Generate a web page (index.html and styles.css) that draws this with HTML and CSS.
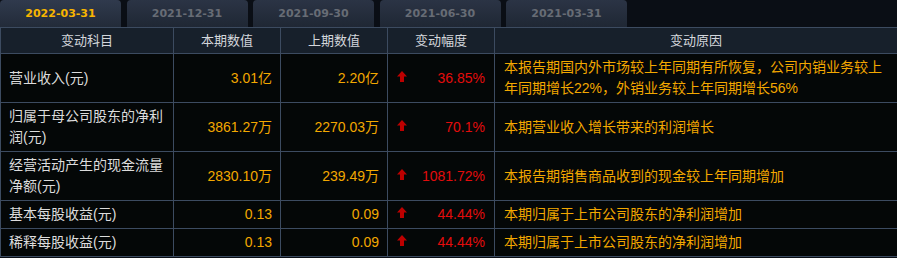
FILE: index.html
```html
<!DOCTYPE html>
<html lang="zh">
<head>
<meta charset="utf-8">
<title>变动</title>
<link rel="stylesheet" href="styles.css">
</head>
<body>
<div class="tabs">
  <div class="tab active">2022-03-31</div>
  <div class="tab">2021-12-31</div>
  <div class="tab">2021-09-30</div>
  <div class="tab">2021-06-30</div>
  <div class="tab">2021-03-31</div>
</div>
<div class="grid">
  <div class="hd">变动科目</div>
  <div class="hd">本期数值</div>
  <div class="hd">上期数值</div>
  <div class="hd">变动幅度</div>
  <div class="hd">变动原因</div>

  <div class="c name">营业收入(元)</div>
  <div class="c num">3.01亿</div>
  <div class="c num">2.20亿</div>
  <div class="c pct"><svg class="up" viewBox="0 0 10 11"><path d="M5 0 L10 5.5 L7 5.5 L7 11 L3 11 L3 5.5 L0 5.5 Z"/></svg><span>36.85%</span></div>
  <div class="c why">本报告期国内外市场较上年同期有所恢复，公司内销业务较上年同期增长22%，外销业务较上年同期增长56%</div>

  <div class="c name">归属于母公司股东的净利润(元)</div>
  <div class="c num">3861.27万</div>
  <div class="c num">2270.03万</div>
  <div class="c pct"><svg class="up" viewBox="0 0 10 11"><path d="M5 0 L10 5.5 L7 5.5 L7 11 L3 11 L3 5.5 L0 5.5 Z"/></svg><span>70.1%</span></div>
  <div class="c why">本期营业收入增长带来的利润增长</div>

  <div class="c name">经营活动产生的现金流量净额(元)</div>
  <div class="c num">2830.10万</div>
  <div class="c num">239.49万</div>
  <div class="c pct"><svg class="up" viewBox="0 0 10 11"><path d="M5 0 L10 5.5 L7 5.5 L7 11 L3 11 L3 5.5 L0 5.5 Z"/></svg><span>1081.72%</span></div>
  <div class="c why">本报告期销售商品收到的现金较上年同期增加</div>

  <div class="c name">基本每股收益(元)</div>
  <div class="c num">0.13</div>
  <div class="c num">0.09</div>
  <div class="c pct"><svg class="up" viewBox="0 0 10 11"><path d="M5 0 L10 5.5 L7 5.5 L7 11 L3 11 L3 5.5 L0 5.5 Z"/></svg><span>44.44%</span></div>
  <div class="c why">本期归属于上市公司股东的净利润增加</div>

  <div class="c name">稀释每股收益(元)</div>
  <div class="c num">0.13</div>
  <div class="c num">0.09</div>
  <div class="c pct"><svg class="up" viewBox="0 0 10 11"><path d="M5 0 L10 5.5 L7 5.5 L7 11 L3 11 L3 5.5 L0 5.5 Z"/></svg><span>44.44%</span></div>
  <div class="c why">本期归属于上市公司股东的净利润增加</div>
</div>
</body>
</html>
```

FILE: styles.css
```css
html, body {
  margin: 0;
  padding: 0;
  background: #0a0e15;
}
body {
  width: 897px;
  font-family: "Liberation Sans", "Noto Sans CJK SC", sans-serif;
}
.tabs {
  display: flex;
  gap: 5.5px;
  height: 27px;
}
.tab {
  width: 121px;
  height: 27px;
  border-radius: 4px 4px 0 0;
  background: linear-gradient(#2b3445, #1f2734);
  color: #676c75;
  font-family: "DejaVu Sans", sans-serif;
  font-weight: bold;
  font-size: 11px;
  line-height: 27px;
  text-align: center;
}
.tab.active {
  background: linear-gradient(#303a4d, #222b39);
  color: #f7b500;
}
.grid {
  display: grid;
  grid-template-columns: 173px 107px 107px 107px 1fr;
  border-top: 1px solid #3c4b60;
  border-left: 1px solid #3c4b60;
  background: #040707;
}
.hd, .c {
  border-bottom: 1px solid #3c4b60;
  border-right: 1px solid #3c4b60;
  display: flex;
  align-items: center;
  font-size: 14px;
  line-height: 21px;
  padding: 3px 8px;
  font-family: "Liberation Sans", "Noto Sans CJK SC", sans-serif;
}
.hd:nth-child(5n), .c.why {
  border-right: none;
}
.hd {
  background: #17202b;
  color: #d3d6db;
  font-size: 13px;
  justify-content: center;
  height: 26px;
  padding: 0 8px;
  box-sizing: border-box;
  line-height: 26px;
}
.name {
  color: #dcdcdc;
}
.num {
  color: #f3a800;
  justify-content: flex-end;
}
.pct {
  color: #e30c0c;
  justify-content: space-between;
  padding: 3px 9px;
}
.up {
  width: 10px;
  height: 11px;
  fill: #bd0000;
  margin-top: -4px;
}
.why {
  color: #f3a800;
  padding: 3px 9px;
}
```
